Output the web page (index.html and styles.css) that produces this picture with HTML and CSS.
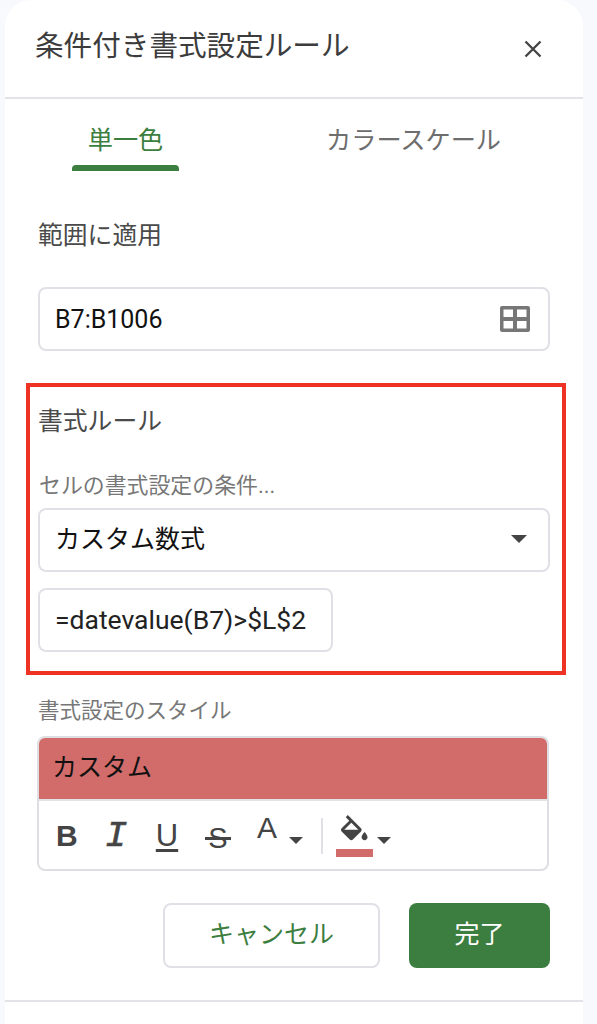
FILE: index.html

```html
<!DOCTYPE html>
<html lang="ja">
<head>
  <meta charset="UTF-8">
  <title>条件付き書式設定ルール</title>
  <link rel="stylesheet" href="styles.css">
</head>
<body>

<div class="panel">
  <div class="panel-head">
    <h1 class="panel-title">条件付き書式設定ルール</h1>
    <svg class="close-icon" width="18" height="18" viewBox="0 0 18 18"><path d="M1.5 1.5L16.5 16.5M16.5 1.5L1.5 16.5" stroke="#444" stroke-width="2.3" fill="none"/></svg>
  </div>

  <div class="tabs">
    <div class="tab tab-active">単一色<span class="tab-bar"></span></div>
    <div class="tab tab-other">カラースケール</div>
  </div>

  <div class="section-label range-label">範囲に適用</div>
  <div class="field range-field">
    <span class="field-text">B7:B1006</span>
    <svg class="grid-icon" width="30" height="26" viewBox="0 0 30 26"><path fill="#777" fill-rule="evenodd" d="M2 0h26a2 2 0 0 1 2 2v22a2 2 0 0 1-2 2H2a2 2 0 0 1-2-2V2a2 2 0 0 1 2-2zM3.500 3.500v7.500h9.500V3.500zM17 3.500v7.500h9.500V3.500zM3.500 15v7.500h9.500V15zM17 15v7.500h9.500V15z"/></svg>
  </div>

  <div class="rule-box">
    <div class="section-label">書式ルール</div>
    <div class="small-label cond-label">セルの書式設定の条件...</div>
    <div class="field select-field">
      <span class="field-text">カスタム数式</span>
      <span class="caret caret-big"></span>
    </div>
    <div class="field formula-field">
      <span class="field-text formula-text">=datevalue(B7)&gt;$L$2</span>
    </div>
  </div>

  <div class="small-label style-label">書式設定のスタイル</div>
  <div class="style-box">
    <div class="style-preview">カスタム</div>
    <div class="toolbar">
      <span class="tool tool-b">B</span>
      <span class="tool tool-i">I</span>
      <span class="tool tool-u">U</span>
      <span class="tool tool-s">S</span>
      <span class="tool tool-a">A</span>
      <span class="caret caret-a"></span>
      <span class="tool-sep"></span>
      <div class="fill-tool">
        <svg width="28" height="26" viewBox="3 0 19 17.500"><path fill="#444" d="M16.560 8.940L7.620 0 6.210 1.410l2.380 2.380-5.150 5.150c-.59.59-.59 1.540 0 2.120l5.500 5.500c.29.290.68.440 1.060.440s.77-.15 1.060-.44l5.500-5.500c.59-.58.59-1.530 0-2.110zM5.210 10L10 5.210 14.790 10H5.210zM19 11.500s-2 2.170-2 3.500c0 1.100.9 2 2 2s2-.9 2-2c0-1.330-2-3.500-2-3.500z"/></svg>
        <span class="fill-swatch"></span>
      </div>
      <span class="caret caret-fill"></span>
    </div>
  </div>

  <div class="actions">
    <button class="btn btn-cancel" type="button">キャンセル</button>
    <button class="btn btn-done" type="button">完了</button>
  </div>
</div>

</body>
</html>
```

FILE: styles.css

```css
html, body { margin: 0; height: 1024px; overflow: hidden; }
body { background: #f8f9fd; font-family: Roboto, "Noto Sans CJK JP", sans-serif; color: #222; }

.panel { box-sizing: border-box; width: 578px; height: 1024px; margin-left: 5px; background: #fff; border-radius: 26px 26px 0 0; padding-bottom: 23px; position: relative; }

.panel-head { display: flex; justify-content: space-between; align-items: center; height: 99px; box-sizing: border-box; border-bottom: 2px solid #e2e3e8; padding: 0 41px 0 30px; }
.panel-title { margin: 0 0 5px; font-size: 28.600px; font-weight: 400; color: #3c3c3c; line-height: 40px; }

.tabs { display: flex; height: 73px; }
.tab { font-size: 25.200px; line-height: 36px; padding-top: 24px; text-align: center; position: relative; }
.tab-active { color: #3c7e40; width: 107px; margin-left: 67px; }
.tab-other { color: #6e6e6e; margin-left: 147px; }
.tab-bar { position: absolute; left: 0; right: 0; bottom: 1px; height: 6px; background: #3c7e40; border-radius: 4px 4px 0 0; }

.section-label { font-size: 24.800px; line-height: 36px; color: #4a4a4a; margin-left: 33px; }
.range-label { margin-top: 46px; }

.field { box-sizing: border-box; display: flex; justify-content: space-between; align-items: center; height: 64px; margin-left: 33px; border: 2px solid #e0e1e6; border-radius: 8px; padding: 0 18px 0 15px; background: #fff; }
.field-text { font-size: 25px; color: #111; margin-top: 1px; }
.range-field { width: 512px; margin-top: 33px; }
.select-field { width: 512px; margin: 7px 0 0 8px; padding-right: 21px; }
.select-field .field-text { margin-top: -7px; }
.formula-field { width: 295px; margin: 16px 0 0 8px; }
.formula-text { font-size: 26.500px; color: #222; margin-top: -1px; }

.rule-box { box-sizing: border-box; width: 540px; height: 292px; margin: 32px 0 0 21px; border: 4px solid #ee3325; padding-top: 17px; }
.rule-box .section-label { margin-left: 8px; }
.small-label { font-size: 21.500px; line-height: 30px; color: #777; }
.cond-label { margin: 31px 0 0 9px; font-size: 21.900px; }
.style-label { margin: 21px 0 0 33px; }

.style-box { box-sizing: border-box; width: 512px; height: 135px; margin: 10px 0 0 32px; border: 2px solid #dedfe3; border-radius: 8px; overflow: hidden; }
.style-preview { height: 61px; background: #d16c6a; color: #111; font-size: 25px; line-height: 59px; padding-left: 13px; border-bottom: 2px solid #e2e3e6; }

.toolbar { display: flex; align-items: flex-start; height: 70px; position: relative; }
.tool { display: block; color: #444; font-family: "Liberation Sans", Arial, sans-serif; line-height: 32px; text-align: center; position: relative; }
.tool-b { width: 20px; margin: 19px 0 0 17px; font-size: 30px; font-weight: 700; }
.tool-i { width: 24px; margin: 19px 0 0 28px; font-family: "Liberation Mono", monospace; font-size: 37px; font-weight: 400; font-style: italic; -webkit-text-stroke: 0.6px #444; }
.tool-u { width: 24px; margin: 19px 0 0 27px; font-size: 31px; text-decoration: underline; text-decoration-thickness: 3px; text-underline-offset: 3px; }
.tool-s { width: 26px; margin: 21px 0 0 26px; font-size: 29px; }
.tool-s::after { content: ""; position: absolute; left: 0; right: 0; top: 15px; height: 3px; background: #444; }
.tool-a { width: 22px; margin: 11px 0 0 25px; font-size: 30px; }

.caret { display: block; width: 0; height: 0; border-left: 7px solid transparent; border-right: 7px solid transparent; border-top: 7px solid #444; }
.caret-big { border-left-width: 8px; border-right-width: 8px; border-top-width: 8px; margin-top: -3px; }
.caret-a { margin: 36px 0 0 11px; }
.tool-sep { width: 2px; height: 36px; background: #dfe0e3; margin: 17px 0 0 18px; }
.fill-tool { display: flex; flex-direction: column; align-items: center; width: 37px; margin: 14px 0 0 13px; }
.fill-swatch { width: 37px; height: 8px; background: #d16c6a; margin-top: 8px; }
.caret-fill { margin: 36px 0 0 4px; }

.actions { display: flex; gap: 29px; margin: 32px 0 0 158px; }
.btn { box-sizing: border-box; height: 65px; border-radius: 8px; font-size: 25px; font-family: inherit; padding: 0 0 7px; }
.btn-cancel { width: 217px; background: #fff; color: #3c7e40; border: 2px solid #e0e1e6; }
.btn-done { width: 141px; background: #3c7e40; color: #fff; border: none; }

.panel::after { content: ""; position: absolute; left: 0; right: 0; top: 1000px; border-top: 2px solid #e2e3e8; }
```
